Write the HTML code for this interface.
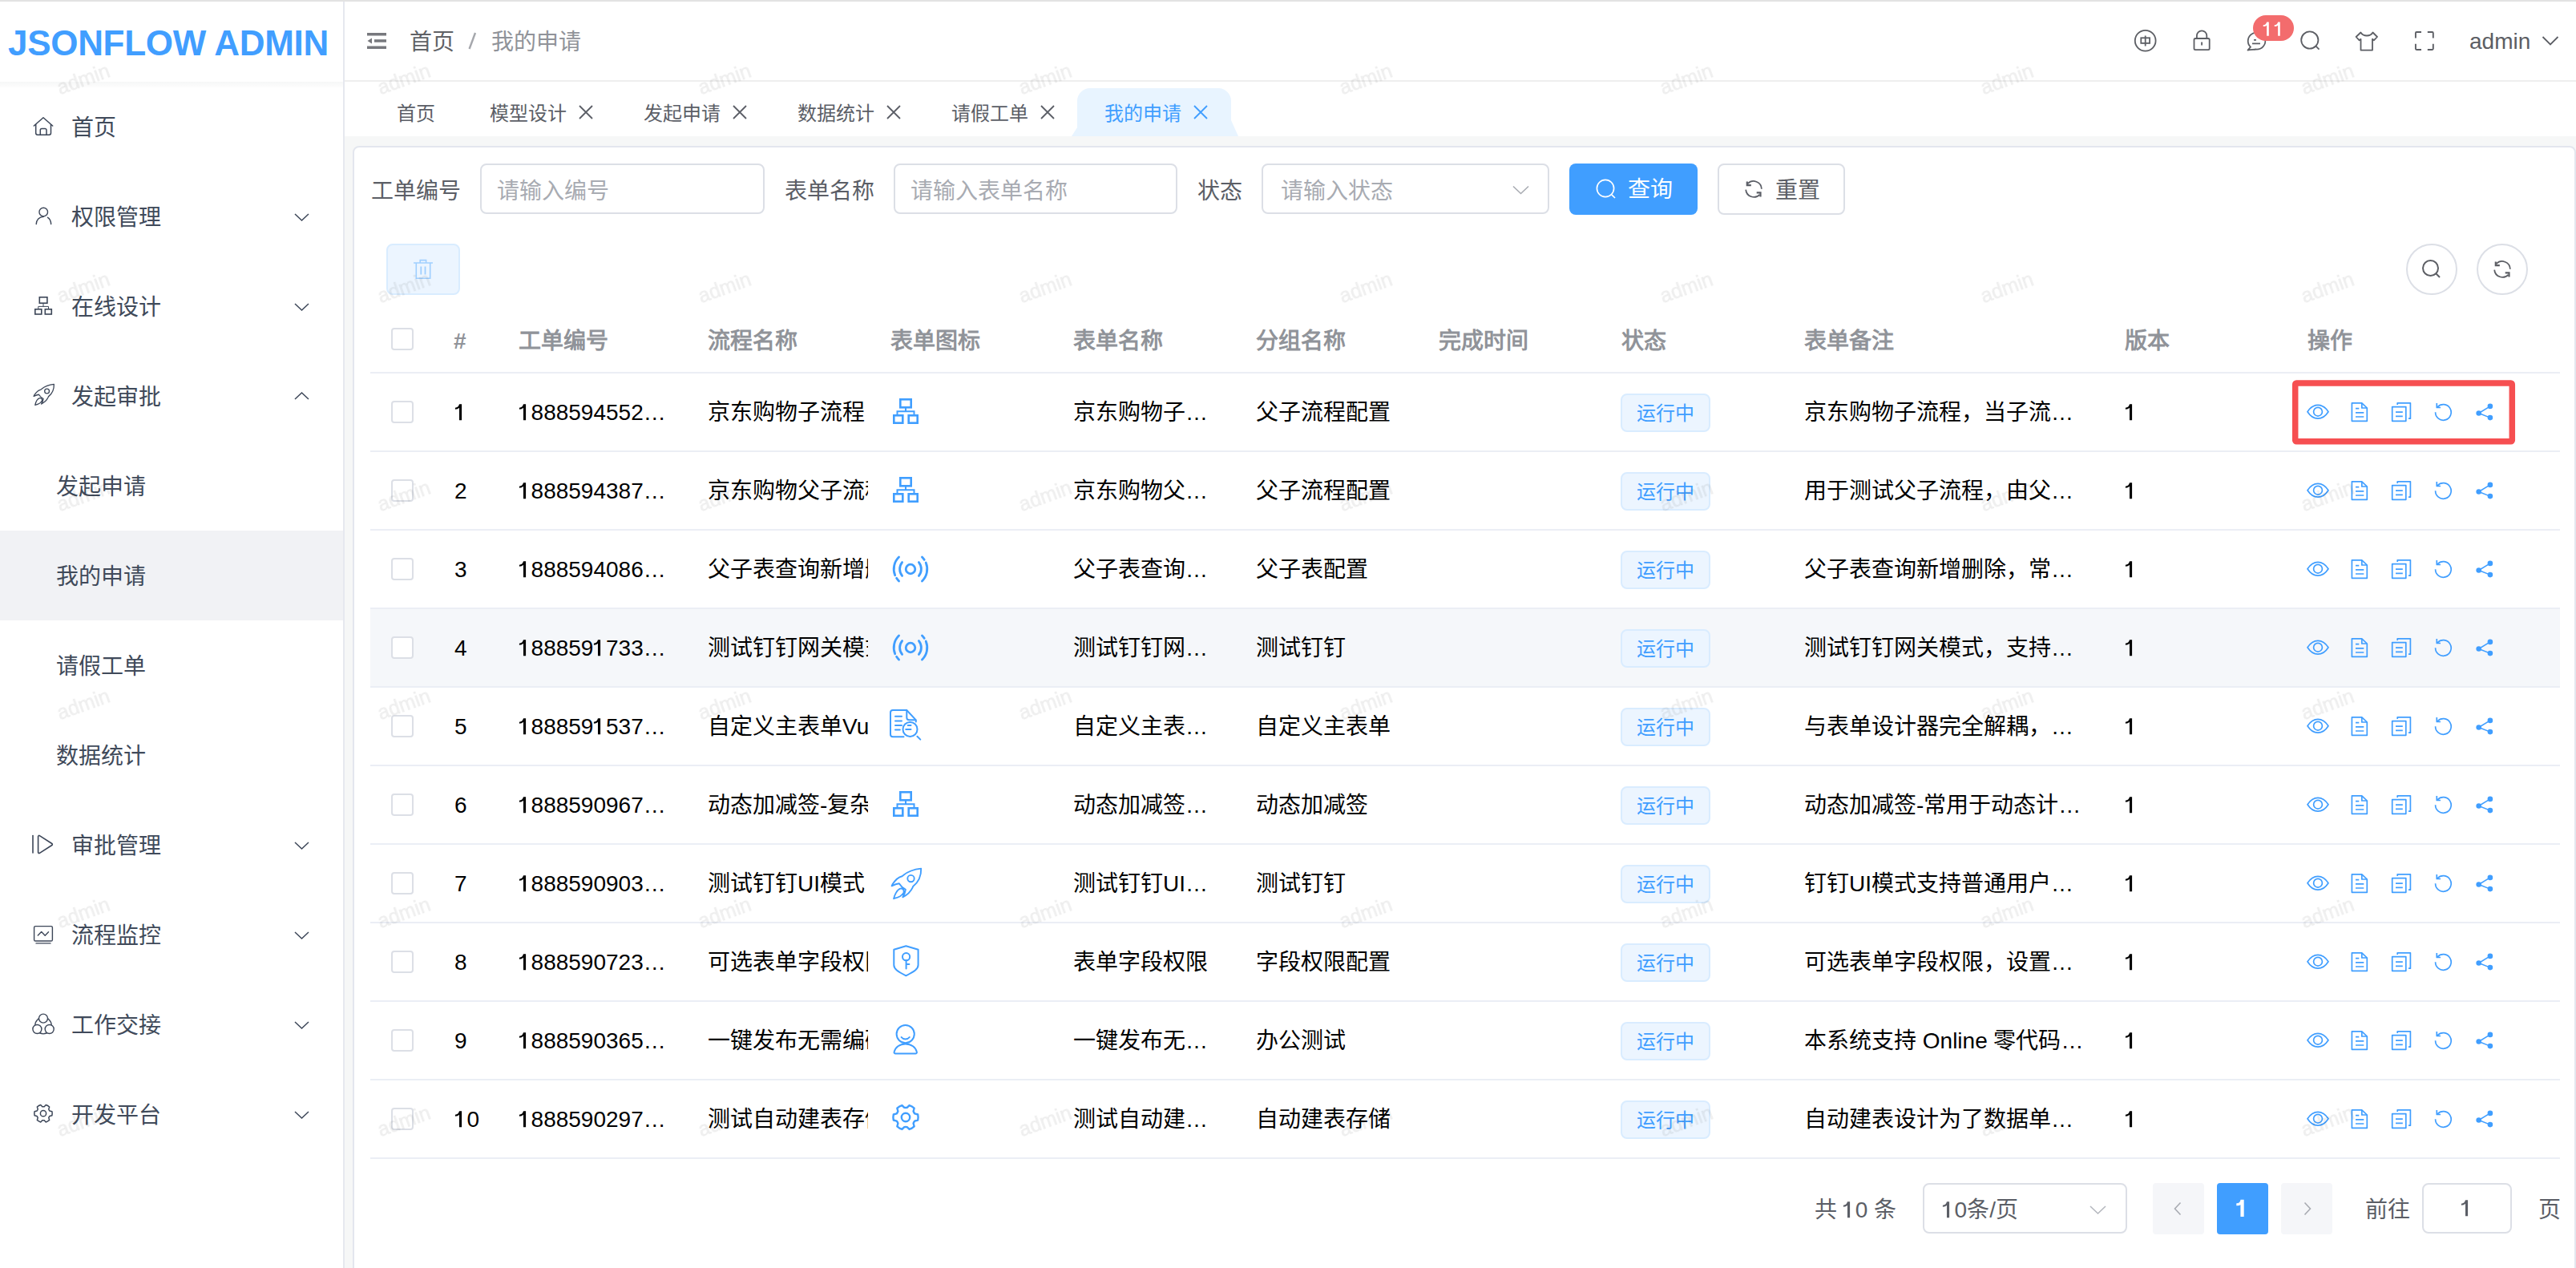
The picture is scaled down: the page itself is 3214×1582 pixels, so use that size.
<!DOCTYPE html><html lang="zh-CN"><head><meta charset="utf-8"><style>
*{box-sizing:border-box;margin:0;padding:0}
html,body{width:3214px;height:1582px;overflow:hidden;background:#fff}
body{font-family:"Liberation Sans",sans-serif;position:relative;color:#303133}
.a{position:absolute;white-space:nowrap}
svg.a{overflow:visible}
.topline{left:0;top:0;width:3214px;height:2px;background:#e2e2e2}
.side{left:0;top:2px;width:428px;height:1580px;background:#fff}
.sideborder{left:428px;top:2px;width:2px;height:1580px;background:#e6e8ef}
.logo{left:10px;top:26px;font-size:44px;font-weight:bold;color:#419eff;letter-spacing:-0.3px;line-height:56px}
.logoshadow{left:0;top:102px;width:428px;height:7px;background:linear-gradient(#f6f7f7,#fdfdfd)}
.mi{left:0;width:428px;height:112px;font-size:28px;color:#404a5a;line-height:112px}
.mi .t{position:absolute;left:89px;top:2px}
.mi.sub .t{left:70px}
.mi.act{background:#f1f2f5}
.mi svg{position:absolute;overflow:visible}
.hdr{left:430px;top:2px;width:2784px;height:98px;background:#fff}
.hdrline{left:430px;top:100px;width:2784px;height:2px;background:#eeeeee}
.tabs{left:430px;top:102px;width:2784px;height:68px;background:#fff}
.content{left:430px;top:170px;width:2784px;height:1412px;background:#f6f7f7}
.card{left:440px;top:182px;width:2774px;height:1420px;background:#fff;border:2px solid #e3e6ee;border-radius:8px}
.tab{top:111.5px;height:60px;line-height:60px;font-size:24px;color:#5b5e66}
.crumb{top:28px;font-size:28px;line-height:50px}
.lbl{font-size:28px;color:#5b5e66;line-height:62px;top:207.5px}
.inp{top:204px;height:63px;border:2px solid #dcdfe6;border-radius:8px;background:#fff}
.ph{font-size:28px;color:#a8abb2;line-height:59px;left:19px;top:2.5px}
.th{top:406px;font-size:28px;font-weight:bold;color:#909399;line-height:40px}
.rowline{left:462px;width:2732px;height:2px;background:#ebeef5}
.td{font-size:28px;color:#000;line-height:40px;overflow:hidden;margin-top:1px}
.tag{height:48px;width:112px;border:2px solid #d9ecff;background:#ecf5ff;border-radius:8px;color:#409eff;font-size:24px;line-height:46px;text-align:center}
.one{position:relative;color:transparent}.one svg{position:absolute;left:0;top:0;width:0.556em;height:1.117em;overflow:visible}
.cb{width:28px;height:28px;border:2px solid #dcdfe6;border-radius:4px;background:#fff}
.wm{font-size:25px;color:rgba(0,0,0,0.058);transform:rotate(-20deg);transform-origin:0 0;pointer-events:none;filter:blur(0.7px);-webkit-text-stroke:0.6px rgba(0,0,0,0.058)}
</style></head><body><div class="a topline"></div>
<div class="a side"></div><div class="a sideborder"></div>
<div class="a logo">JSONFLOW ADMIN</div>
<div class="a logoshadow"></div>
<div class="a mi" style="top:102px"><svg style="left:0;top:0px" width="100" height="112"><g transform="translate(0 -102)"><path d="M42.3 157 L54 146.8 L65.7 157" fill="none" stroke="#3c4658" stroke-width="1.5" stroke-linecap="round" stroke-linejoin="round"/><path d="M44.7 155 V166 A2.2 2.2 0 0 0 46.9 168.2 H61.3 A2.2 2.2 0 0 0 63.5 166 V155" fill="none" stroke="#3c4658" stroke-width="1.5"/><path d="M50.3 168.2 V162.3 A1.8 1.8 0 0 1 52.1 160.5 H56.2 A1.8 1.8 0 0 1 58 162.3 V168.2" fill="none" stroke="#3c4658" stroke-width="1.5"/></g></svg><span class="t">首页</span></div>
<div class="a mi" style="top:214px"><svg style="left:0;top:0px" width="100" height="112"><g transform="translate(0 -214)"><circle cx="54.25" cy="264.6" r="5.3" fill="none" stroke="#3c4658" stroke-width="1.4"/><path d="M45.2 279.6 C45.6 274 49 270.8 54.5 270.4" fill="none" stroke="#3c4658" stroke-width="1.4" stroke-linecap="round"/><path d="M59.5 271.3 C62 272.6 63.4 275.5 63.7 279.6" fill="none" stroke="#3c4658" stroke-width="1.4" stroke-linecap="round"/></g></svg><span class="t">权限管理</span><svg style="left:366px;top:49.5px" width="20" height="14" viewBox="0 0 20 14"><path d="M2 3 L10.5 11 L19 3" fill="none" stroke="#3c4658" stroke-width="1.5"/></svg></div>
<div class="a mi" style="top:326px"><svg style="left:0;top:0px" width="100" height="112"><g transform="translate(0 -326)"><rect x="49.3" y="370.8" width="9.6" height="7.4" fill="none" stroke="#3c4658" stroke-width="1.6"/><path d="M54 378.2 V382.4 M47.8 386 V382.4 H60.5 V386" fill="none" stroke="#3c4658" stroke-width="1"/><rect x="43.8" y="385.8" width="8" height="6.2" fill="none" stroke="#3c4658" stroke-width="1.6"/><rect x="56.3" y="385.8" width="8" height="6.2" fill="none" stroke="#3c4658" stroke-width="1.6"/></g></svg><span class="t">在线设计</span><svg style="left:366px;top:49.5px" width="20" height="14" viewBox="0 0 20 14"><path d="M2 3 L10.5 11 L19 3" fill="none" stroke="#3c4658" stroke-width="1.5"/></svg></div>
<div class="a mi" style="top:438px"><svg style="left:0;top:0px" width="100" height="112"><g transform="translate(0 -438)"><g transform="translate(40.3 479) scale(0.69)"><path d="M39.2 0.6 C31 1.5 23 4 17.4 8.8 L15.5 10.2 C12 11 8 13.5 3.7 20 L2.6 22.4 C6 20.5 9 19.4 11.8 19.2 C13.5 22 16 24.5 19.9 26.9 C19.5 30 18.5 33 16.3 36.3 C21 34 26 30 28.6 24.4 L29.1 23 C36 17.5 39.5 10 39.2 0.6 Z M5.1 38.2 C6 34 9 27 13.4 25.7 C16 25 18.5 27.5 17.5 30.5 C16 34 10 37 5.1 38.2 Z" fill="none" stroke="#3c4658" stroke-width="1.9" stroke-linejoin="round"/><circle cx="26.5" cy="13.1" r="4.2" fill="none" stroke="#3c4658" stroke-width="1.9"/></g></g></svg><span class="t">发起审批</span><svg style="left:366px;top:49px" width="20" height="14" viewBox="0 0 20 14"><path d="M2 11 L10.5 3 L19 11" fill="none" stroke="#3c4658" stroke-width="1.5"/></svg></div>
<div class="a mi sub" style="top:550px"><span class="t">发起申请</span></div>
<div class="a mi sub act" style="top:662px"><span class="t">我的申请</span></div>
<div class="a mi sub" style="top:774px"><span class="t">请假工单</span></div>
<div class="a mi sub" style="top:886px"><span class="t">数据统计</span></div>
<div class="a mi" style="top:998px"><svg style="left:0;top:0px" width="100" height="112"><g transform="translate(0 -998)"><path d="M41 1042.5 V1064" stroke="#3c4658" stroke-width="1.6" stroke-linecap="round"/><path d="M47.6 1043.6 A1.2 1.2 0 0 1 49.4 1042.6 L64.8 1052.5 A1.2 1.2 0 0 1 64.8 1054.5 L49.4 1064.4 A1.2 1.2 0 0 1 47.6 1063.4 Z" fill="none" stroke="#3c4658" stroke-width="1.6" stroke-linejoin="round"/></g></svg><span class="t">审批管理</span><svg style="left:366px;top:49.5px" width="20" height="14" viewBox="0 0 20 14"><path d="M2 3 L10.5 11 L19 3" fill="none" stroke="#3c4658" stroke-width="1.5"/></svg></div>
<div class="a mi" style="top:1110px"><svg style="left:0;top:0px" width="100" height="112"><g transform="translate(0 -1110)"><rect x="42.6" y="1155.6" width="22.8" height="18.4" rx="1.6" fill="none" stroke="#3c4658" stroke-width="1.4"/><path d="M45 1176.9 H63" stroke="#3c4658" stroke-width="1.4" stroke-linecap="round"/><path d="M47.3 1167.1 L51.7 1162.6 L56.2 1167.2 L60.5 1162.8" fill="none" stroke="#3c4658" stroke-width="1.4" stroke-linecap="round" stroke-linejoin="round"/></g></svg><span class="t">流程监控</span><svg style="left:366px;top:49.5px" width="20" height="14" viewBox="0 0 20 14"><path d="M2 3 L10.5 11 L19 3" fill="none" stroke="#3c4658" stroke-width="1.5"/></svg></div>
<div class="a mi" style="top:1222px"><svg style="left:0;top:0px" width="100" height="112"><g transform="translate(0 -1222)"><circle cx="54" cy="1279.5" r="10.3" fill="none" stroke="#3c4658" stroke-width="1.3"/><circle cx="54" cy="1270.6" r="5.5" fill="#fff" stroke="#3c4658" stroke-width="1.4"/><circle cx="46.4" cy="1284" r="5.5" fill="#fff" stroke="#3c4658" stroke-width="1.4"/><circle cx="61.7" cy="1284" r="5.5" fill="#fff" stroke="#3c4658" stroke-width="1.4"/></g></svg><span class="t">工作交接</span><svg style="left:366px;top:49.5px" width="20" height="14" viewBox="0 0 20 14"><path d="M2 3 L10.5 11 L19 3" fill="none" stroke="#3c4658" stroke-width="1.5"/></svg></div>
<div class="a mi" style="top:1334px"><svg style="left:0;top:0px" width="100" height="112"><g transform="translate(0 -1334)"><path d="M64.91 1386.68 A11.20 11.20 0 0 1 64.91 1391.72 L61.97 1392.42 A7.74 7.74 0 0 0 60.78 1394.49 L61.64 1397.39 A11.20 11.20 0 0 1 57.27 1399.91 L55.20 1397.72 A7.74 7.74 0 0 0 52.80 1397.72 L50.73 1399.91 A11.20 11.20 0 0 1 46.36 1397.39 L47.22 1394.49 A7.74 7.74 0 0 0 46.03 1392.42 L43.09 1391.72 A11.20 11.20 0 0 1 43.09 1386.68 L46.03 1385.98 A7.74 7.74 0 0 0 47.22 1383.91 L46.36 1381.01 A11.20 11.20 0 0 1 50.73 1378.49 L52.80 1380.68 A7.74 7.74 0 0 0 55.20 1380.68 L57.27 1378.49 A11.20 11.20 0 0 1 61.64 1381.01 L60.78 1383.91 A7.74 7.74 0 0 0 61.97 1385.98 Z" fill="none" stroke="#3c4658" stroke-width="1.5" stroke-linejoin="round"/><circle cx="54" cy="1389.2" r="3.6" fill="none" stroke="#3c4658" stroke-width="1.5"/></g></svg><span class="t">开发平台</span><svg style="left:366px;top:49.5px" width="20" height="14" viewBox="0 0 20 14"><path d="M2 3 L10.5 11 L19 3" fill="none" stroke="#3c4658" stroke-width="1.5"/></svg></div>
<div class="a hdr"></div><div class="a hdrline"></div>
<svg class="a" style="left:458px;top:41px" width="24" height="20" viewBox="0 0 24 20"><rect x="0" y="0" width="24" height="3.5" fill="#77787d"/><rect x="9" y="8.2" width="15" height="3.5" fill="#77787d"/><rect x="0" y="16.5" width="24" height="3.5" fill="#77787d"/><path d="M0.5 10 L6 6.5 V13.5 Z" fill="#77787d"/></svg>
<div class="a crumb" style="left:510.5px;color:#606266">首页</div>
<svg class="a" style="left:0;top:0" width="1" height="1"><path d="M585.6 61 L593 41" stroke="#a5a7ac" stroke-width="2.4"/></svg>
<div class="a crumb" style="left:612.5px;color:#909399">我的申请</div>
<svg class="a" style="left:0;top:0" width="1" height="1"><g fill="none" stroke="#5c5e64" stroke-width="1.8"><circle cx="2676.7" cy="50.8" r="12.9"/><rect x="2671.3" y="47.3" width="10.8" height="6.6"/><path d="M2676.7 44.5 V57.5"/><path d="M2740.9 47.7 V44.5 A6.2 6.2 0 0 1 2753.3 44.5 V47.7"/><rect x="2737.5" y="48" width="19.2" height="14.2" rx="1.6"/><path d="M2747.1 52.5 V56.5"/></g></svg>
<svg class="a" style="left:0;top:0" width="1" height="1"><g fill="none" stroke="#5c5e64" stroke-width="1.8" stroke-linejoin="round"><path d="M2808 58.6 A10.8 10.4 0 1 1 2814.6 61.5 C2812 61.8 2808 62 2804.5 62.5 Z"/><path d="M2810 54.3 H2820 M2812 49.8 H2815"/></g></svg>
<div class="a" style="left:2811px;top:19px;width:51px;height:32px;border-radius:16px;background:#f36c6d;color:#fff;font-size:24px;line-height:35px;text-align:center"><span class="one">1<svg viewBox="0 0 556 1117" preserveAspectRatio="none"><path d="M214 187 H325 V905 H214 V352 C175 395 105 421 32 421 V349 C125 340 195 285 214 187 Z" fill="#fff"/></svg></span><span class="one">1<svg viewBox="0 0 556 1117" preserveAspectRatio="none"><path d="M214 187 H325 V905 H214 V352 C175 395 105 421 32 421 V349 C125 340 195 285 214 187 Z" fill="#fff"/></svg></span></div>
<svg class="a" style="left:0;top:0" width="1" height="1"><g fill="none" stroke="#5c5e64" stroke-width="1.8"><circle cx="2881.8" cy="50" r="10.6"/><path d="M2889.5 57.6 L2893.5 61.6"/></g></svg>
<svg class="a" style="left:0;top:0" width="1" height="1"><g fill="none" stroke="#5c5e64" stroke-width="1.8" stroke-linejoin="round"><path d="M2945.4 40.5 C2947.5 44 2950 44.5 2953 44.5 C2956 44.5 2958.5 44 2960.5 40.5 L2966 46 L2962 50.2 L2960 48.8 V62.6 H2945.5 V48.8 L2943.5 50.2 L2939.6 46 Z"/></g></svg>
<svg class="a" style="left:0;top:0" width="1" height="1"><g fill="none" stroke="#5c5e64" stroke-width="1.9" stroke-linecap="butt"><path d="M3013.9 47.5 V41.2 A1.2 1.2 0 0 1 3015.1 40 H3021"/><path d="M3028.8 40 H3034.6 A1.2 1.2 0 0 1 3035.8 41.2 V47.5"/><path d="M3035.8 54.8 V60.8 A1.2 1.2 0 0 1 3034.6 62 H3028.8"/><path d="M3021 62 H3015.1 A1.2 1.2 0 0 1 3013.9 60.8 V54.8"/></g></svg>
<div class="a" style="left:3081px;top:29px;font-size:28px;line-height:46px;color:#5c5e64">admin</div>
<svg class="a" style="left:3171px;top:44px" width="22" height="14" viewBox="0 0 22 14"><path d="M1.5 2 L11 11.5 L20.5 2" fill="none" stroke="#5c5e64" stroke-width="1.8"/></svg>
<div class="a tabs"></div>
<svg class="a" style="left:1337px;top:110px" width="208" height="60" viewBox="0 0 208 60"><path d="M0 60 L7 49 V16 A16 16 0 0 1 23 0 H183 A16 16 0 0 1 199 16 V40 L208 60 Z" fill="#e8f4ff"/></svg>
<div class="a tab" style="left:495px;color:#5b5e66">首页</div>
<div class="a tab" style="left:611px;color:#5b5e66">模型设计</div>
<svg class="a" style="left:721px;top:130px" width="20" height="20" viewBox="0 0 20 20"><path d="M2 2 L18 18 M18 2 L2 18" stroke="#5b5e66" stroke-width="1.8"/></svg>
<div class="a tab" style="left:803px;color:#5b5e66">发起申请</div>
<svg class="a" style="left:913px;top:130px" width="20" height="20" viewBox="0 0 20 20"><path d="M2 2 L18 18 M18 2 L2 18" stroke="#5b5e66" stroke-width="1.8"/></svg>
<div class="a tab" style="left:995px;color:#5b5e66">数据统计</div>
<svg class="a" style="left:1105px;top:130px" width="20" height="20" viewBox="0 0 20 20"><path d="M2 2 L18 18 M18 2 L2 18" stroke="#5b5e66" stroke-width="1.8"/></svg>
<div class="a tab" style="left:1187px;color:#5b5e66">请假工单</div>
<svg class="a" style="left:1297px;top:130px" width="20" height="20" viewBox="0 0 20 20"><path d="M2 2 L18 18 M18 2 L2 18" stroke="#5b5e66" stroke-width="1.8"/></svg>
<div class="a tab" style="left:1378px;color:#409eff">我的申请</div>
<svg class="a" style="left:1488px;top:130px" width="20" height="20" viewBox="0 0 20 20"><path d="M2 2 L18 18 M18 2 L2 18" stroke="#409eff" stroke-width="1.8"/></svg>
<div class="a content"></div>
<div class="a card"></div>
<div class="a lbl" style="left:463px">工单编号</div>
<div class="a inp" style="left:599px;width:355px"><div class="a ph">请输入编号</div></div>
<div class="a lbl" style="left:979px">表单名称</div>
<div class="a inp" style="left:1115px;width:354px"><div class="a ph">请输入表单名称</div></div>
<div class="a lbl" style="left:1494px">状态</div>
<div class="a inp" style="left:1574px;width:359px"><div class="a ph" style="left:22px">请输入状态</div><svg class="a" style="left:309px;top:24px" width="24" height="14" viewBox="0 0 24 14"><path d="M3 2.5 L12.5 11.5 L22 2.5" fill="none" stroke="#a8abb2" stroke-width="1.6"/></svg></div>
<div class="a" style="left:1958px;top:204px;width:160px;height:64px;background:#409eff;border-radius:8px"></div>
<svg class="a" style="left:1991px;top:223px" width="26" height="26" viewBox="0 0 26 26"><circle cx="12" cy="12" r="10.6" fill="none" stroke="#fff" stroke-width="1.7"/><path d="M19.8 19.8 L24 24" stroke="#fff" stroke-width="1.7"/></svg>
<div class="a" style="left:2031px;top:205px;font-size:28px;line-height:64px;color:#fff">查询</div>
<div class="a" style="left:2143px;top:204px;width:159px;height:64px;border:2px solid #dcdfe6;border-radius:8px;background:#fff"></div>
<svg class="a" style="left:2176px;top:223.8px" width="24" height="24" viewBox="0 0 24 24"><g fill="none" stroke="#5b5e66" stroke-width="1.8"><path d="M4.6 5.1 A10.1 10.1 0 0 1 21.9 11.7 M2.2 12.6 A10.1 10.1 0 0 0 19.5 18.8"/></g><g fill="none" stroke="#5b5e66" stroke-width="2.2"><path d="M3.8 2.6 V7.2 H8.8 M15.7 16.4 H20.5 V21.5"/></g></svg>
<div class="a" style="left:2215px;top:205.5px;font-size:28px;line-height:64px;color:#5b5e66">重置</div>
<div class="a" style="left:482px;top:304px;width:92px;height:64px;background:#ecf5ff;border:2px solid #d9ecff;border-radius:8px"></div>
<svg class="a" style="left:0;top:0" width="1" height="1"><g fill="none" stroke="#a0cfff" stroke-width="1.6"><path d="M516 328 H540 M524.2 328 V324.6 H531.6 V328 M519.3 328 V347.2 H536.7 V328"/><path d="M525.3 332.5 V342.5 M530.5 332.5 V342.5" stroke-width="1.8"/></g></svg>
<div class="a" style="left:3002px;top:304px;width:64px;height:64px;border:2px solid #dcdfe6;border-radius:50%;background:#fff"></div>
<svg class="a" style="left:3021px;top:323px" width="26" height="26" viewBox="0 0 26 26"><circle cx="11.5" cy="11.5" r="9.5" fill="none" stroke="#5c5e64" stroke-width="2"/><path d="M18.5 18.5 L23 23" stroke="#5c5e64" stroke-width="2"/></svg>
<div class="a" style="left:3090px;top:304px;width:64px;height:64px;border:2px solid #dcdfe6;border-radius:50%;background:#fff"></div>
<svg class="a" style="left:3109.8px;top:323.8px" width="24" height="24" viewBox="0 0 24 24"><g fill="none" stroke="#5c5e64" stroke-width="1.8"><path d="M4.6 5.1 A10.1 10.1 0 0 1 21.9 11.7 M2.2 12.6 A10.1 10.1 0 0 0 19.5 18.8"/></g><g fill="none" stroke="#5c5e64" stroke-width="2.2"><path d="M3.8 2.6 V7.2 H8.8 M15.7 16.4 H20.5 V21.5"/></g></svg>
<div class="a cb" style="left:488px;top:409px"></div>
<div class="a th" style="left:566px">#</div>
<div class="a th" style="left:647px">工单编号</div>
<div class="a th" style="left:883px">流程名称</div>
<div class="a th" style="left:1111px">表单图标</div>
<div class="a th" style="left:1339px">表单名称</div>
<div class="a th" style="left:1567px">分组名称</div>
<div class="a th" style="left:1795px">完成时间</div>
<div class="a th" style="left:2023px">状态</div>
<div class="a th" style="left:2251px">表单备注</div>
<div class="a th" style="left:2651px">版本</div>
<div class="a th" style="left:2879px">操作</div>
<div class="a rowline" style="top:464px"></div>
<div class="a cb" style="left:488px;top:500px"></div>
<div class="a td" style="left:567px;top:494px"><span class="one">1<svg viewBox="0 0 556 1117" preserveAspectRatio="none"><path d="M214 187 H325 V905 H214 V352 C175 395 105 421 32 421 V349 C125 340 195 285 214 187 Z" fill="#000"/></svg></span></div>
<div class="a td" style="left:647px;top:494px"><span class="one">1<svg viewBox="0 0 556 1117" preserveAspectRatio="none"><path d="M214 187 H325 V905 H214 V352 C175 395 105 421 32 421 V349 C125 340 195 285 214 187 Z" fill="#000"/></svg></span>888594552…</div>
<div class="a td" style="left:883px;top:494px;width:200px">京东购物子流程</div>
<svg class="a" style="left:1114px;top:496.5px" width="32" height="32" viewBox="0 0 32 32"><g fill="none" stroke="#409eff" stroke-width="2.6"><rect x="9.3" y="1.3" width="13.4" height="10"/><path d="M16 11.3 V16.3 M5.5 21 V16.3 H26.5 V21" stroke-width="2"/><rect x="1.3" y="21.3" width="11" height="9.4"/><rect x="19.7" y="21.3" width="11" height="9.4"/></g></svg>
<div class="a td" style="left:1339px;top:494px">京东购物子…</div>
<div class="a td" style="left:1567px;top:494px">父子流程配置</div>
<div class="a tag" style="left:2022px;top:491px">运行中</div>
<div class="a td" style="left:2251px;top:494px">京东购物子流程，当子流…</div>
<div class="a td" style="left:2651px;top:494px"><span class="one">1<svg viewBox="0 0 556 1117" preserveAspectRatio="none"><path d="M214 187 H325 V905 H214 V352 C175 395 105 421 32 421 V349 C125 340 195 285 214 187 Z" fill="#000"/></svg></span></div>
<svg class="a" style="left:0;top:-98px" width="1" height="1"><g fill="none" stroke="#409eff" stroke-width="1.7" stroke-linejoin="round"><path d="M2879 611.7 C2883 605.5 2887 603.3 2892 603.3 C2897 603.3 2901 605.5 2905 611.7 C2901 617.9 2897 620.2 2892 620.2 C2887 620.2 2883 617.9 2879 611.7 Z"/><circle cx="2892" cy="611.7" r="5.4"/><path d="M2934.4 600.8 H2946.8 L2953.3 607 V623.3 H2934.4 Z"/><path d="M2946.8 601 V607 H2953"/><path d="M2939 607.6 H2943.3 M2939 612.8 H2949.3 M2939 618 H2949.3"/><path d="M2991.2 603 V600.8 H3007.4 V620.2 H3005"/><path d="M2984.7 605.6 H3001.8 V623.3 H2984.7 Z"/><path d="M2989 612.2 H2997.8 M2989 617.4 H2997.8"/><path d="M3040.3 601 V606.5 H3045"/><path d="M3041.2 605.8 A9.8 9.8 0 1 1 3038.6 612.2"/><path d="M3106.9 604.9 L3092.7 613.5 L3106.9 619.1" stroke-width="1.5"/></g><g fill="#409eff"><circle cx="3106.9" cy="604.9" r="3.3"/><circle cx="3092.7" cy="613.5" r="3.3"/><circle cx="3106.9" cy="619.1" r="3.3"/></g></svg>
<div class="a rowline" style="top:562px"></div>
<div class="a cb" style="left:488px;top:598px"></div>
<div class="a td" style="left:567px;top:592px">2</div>
<div class="a td" style="left:647px;top:592px"><span class="one">1<svg viewBox="0 0 556 1117" preserveAspectRatio="none"><path d="M214 187 H325 V905 H214 V352 C175 395 105 421 32 421 V349 C125 340 195 285 214 187 Z" fill="#000"/></svg></span>888594387…</div>
<div class="a td" style="left:883px;top:592px;width:200px">京东购物父子流程</div>
<svg class="a" style="left:1114px;top:594.5px" width="32" height="32" viewBox="0 0 32 32"><g fill="none" stroke="#409eff" stroke-width="2.6"><rect x="9.3" y="1.3" width="13.4" height="10"/><path d="M16 11.3 V16.3 M5.5 21 V16.3 H26.5 V21" stroke-width="2"/><rect x="1.3" y="21.3" width="11" height="9.4"/><rect x="19.7" y="21.3" width="11" height="9.4"/></g></svg>
<div class="a td" style="left:1339px;top:592px">京东购物父…</div>
<div class="a td" style="left:1567px;top:592px">父子流程配置</div>
<div class="a tag" style="left:2022px;top:589px">运行中</div>
<div class="a td" style="left:2251px;top:592px">用于测试父子流程，由父…</div>
<div class="a td" style="left:2651px;top:592px"><span class="one">1<svg viewBox="0 0 556 1117" preserveAspectRatio="none"><path d="M214 187 H325 V905 H214 V352 C175 395 105 421 32 421 V349 C125 340 195 285 214 187 Z" fill="#000"/></svg></span></div>
<svg class="a" style="left:0;top:0px" width="1" height="1"><g fill="none" stroke="#409eff" stroke-width="1.7" stroke-linejoin="round"><path d="M2879 611.7 C2883 605.5 2887 603.3 2892 603.3 C2897 603.3 2901 605.5 2905 611.7 C2901 617.9 2897 620.2 2892 620.2 C2887 620.2 2883 617.9 2879 611.7 Z"/><circle cx="2892" cy="611.7" r="5.4"/><path d="M2934.4 600.8 H2946.8 L2953.3 607 V623.3 H2934.4 Z"/><path d="M2946.8 601 V607 H2953"/><path d="M2939 607.6 H2943.3 M2939 612.8 H2949.3 M2939 618 H2949.3"/><path d="M2991.2 603 V600.8 H3007.4 V620.2 H3005"/><path d="M2984.7 605.6 H3001.8 V623.3 H2984.7 Z"/><path d="M2989 612.2 H2997.8 M2989 617.4 H2997.8"/><path d="M3040.3 601 V606.5 H3045"/><path d="M3041.2 605.8 A9.8 9.8 0 1 1 3038.6 612.2"/><path d="M3106.9 604.9 L3092.7 613.5 L3106.9 619.1" stroke-width="1.5"/></g><g fill="#409eff"><circle cx="3106.9" cy="604.9" r="3.3"/><circle cx="3092.7" cy="613.5" r="3.3"/><circle cx="3106.9" cy="619.1" r="3.3"/></g></svg>
<div class="a rowline" style="top:660px"></div>
<div class="a cb" style="left:488px;top:696px"></div>
<div class="a td" style="left:567px;top:690px">3</div>
<div class="a td" style="left:647px;top:690px"><span class="one">1<svg viewBox="0 0 556 1117" preserveAspectRatio="none"><path d="M214 187 H325 V905 H214 V352 C175 395 105 421 32 421 V349 C125 340 195 285 214 187 Z" fill="#000"/></svg></span>888594086…</div>
<div class="a td" style="left:883px;top:690px;width:200px">父子表查询新增删除</div>
<svg class="a" style="left:1114.4px;top:693.8px" width="44" height="32" viewBox="0 0 44 32"><g fill="none" stroke="#409eff" stroke-width="2.8" stroke-linecap="round"><circle cx="22" cy="16" r="5.8"/><path d="M11.59 7.57 A13.40 13.40 0 0 0 11.59 24.43 M32.41 7.57 A13.40 13.40 0 0 1 32.41 24.43 M7.55 1.04 A20.80 20.80 0 0 0 2.71 23.79 M4.56 27.33 A20.80 20.80 0 0 0 7.55 30.96 M36.45 1.04 A20.80 20.80 0 0 1 39.24 4.37 M41.22 8.04 A20.80 20.80 0 0 1 36.45 30.96 "/></g></svg>
<div class="a td" style="left:1339px;top:690px">父子表查询…</div>
<div class="a td" style="left:1567px;top:690px">父子表配置</div>
<div class="a tag" style="left:2022px;top:687px">运行中</div>
<div class="a td" style="left:2251px;top:690px">父子表查询新增删除，常…</div>
<div class="a td" style="left:2651px;top:690px"><span class="one">1<svg viewBox="0 0 556 1117" preserveAspectRatio="none"><path d="M214 187 H325 V905 H214 V352 C175 395 105 421 32 421 V349 C125 340 195 285 214 187 Z" fill="#000"/></svg></span></div>
<svg class="a" style="left:0;top:98px" width="1" height="1"><g fill="none" stroke="#409eff" stroke-width="1.7" stroke-linejoin="round"><path d="M2879 611.7 C2883 605.5 2887 603.3 2892 603.3 C2897 603.3 2901 605.5 2905 611.7 C2901 617.9 2897 620.2 2892 620.2 C2887 620.2 2883 617.9 2879 611.7 Z"/><circle cx="2892" cy="611.7" r="5.4"/><path d="M2934.4 600.8 H2946.8 L2953.3 607 V623.3 H2934.4 Z"/><path d="M2946.8 601 V607 H2953"/><path d="M2939 607.6 H2943.3 M2939 612.8 H2949.3 M2939 618 H2949.3"/><path d="M2991.2 603 V600.8 H3007.4 V620.2 H3005"/><path d="M2984.7 605.6 H3001.8 V623.3 H2984.7 Z"/><path d="M2989 612.2 H2997.8 M2989 617.4 H2997.8"/><path d="M3040.3 601 V606.5 H3045"/><path d="M3041.2 605.8 A9.8 9.8 0 1 1 3038.6 612.2"/><path d="M3106.9 604.9 L3092.7 613.5 L3106.9 619.1" stroke-width="1.5"/></g><g fill="#409eff"><circle cx="3106.9" cy="604.9" r="3.3"/><circle cx="3092.7" cy="613.5" r="3.3"/><circle cx="3106.9" cy="619.1" r="3.3"/></g></svg>
<div class="a rowline" style="top:758px"></div>
<div class="a" style="left:462px;top:760px;width:2732px;height:96px;background:#f5f7fa"></div>
<div class="a cb" style="left:488px;top:794px"></div>
<div class="a td" style="left:567px;top:788px">4</div>
<div class="a td" style="left:647px;top:788px"><span class="one">1<svg viewBox="0 0 556 1117" preserveAspectRatio="none"><path d="M214 187 H325 V905 H214 V352 C175 395 105 421 32 421 V349 C125 340 195 285 214 187 Z" fill="#000"/></svg></span>88859<span class="one">1<svg viewBox="0 0 556 1117" preserveAspectRatio="none"><path d="M214 187 H325 V905 H214 V352 C175 395 105 421 32 421 V349 C125 340 195 285 214 187 Z" fill="#000"/></svg></span>733…</div>
<div class="a td" style="left:883px;top:788px;width:200px">测试钉钉网关模式</div>
<svg class="a" style="left:1114.4px;top:791.8px" width="44" height="32" viewBox="0 0 44 32"><g fill="none" stroke="#409eff" stroke-width="2.8" stroke-linecap="round"><circle cx="22" cy="16" r="5.8"/><path d="M11.59 7.57 A13.40 13.40 0 0 0 11.59 24.43 M32.41 7.57 A13.40 13.40 0 0 1 32.41 24.43 M7.55 1.04 A20.80 20.80 0 0 0 2.71 23.79 M4.56 27.33 A20.80 20.80 0 0 0 7.55 30.96 M36.45 1.04 A20.80 20.80 0 0 1 39.24 4.37 M41.22 8.04 A20.80 20.80 0 0 1 36.45 30.96 "/></g></svg>
<div class="a td" style="left:1339px;top:788px">测试钉钉网…</div>
<div class="a td" style="left:1567px;top:788px">测试钉钉</div>
<div class="a tag" style="left:2022px;top:785px">运行中</div>
<div class="a td" style="left:2251px;top:788px">测试钉钉网关模式，支持…</div>
<div class="a td" style="left:2651px;top:788px"><span class="one">1<svg viewBox="0 0 556 1117" preserveAspectRatio="none"><path d="M214 187 H325 V905 H214 V352 C175 395 105 421 32 421 V349 C125 340 195 285 214 187 Z" fill="#000"/></svg></span></div>
<svg class="a" style="left:0;top:196px" width="1" height="1"><g fill="none" stroke="#409eff" stroke-width="1.7" stroke-linejoin="round"><path d="M2879 611.7 C2883 605.5 2887 603.3 2892 603.3 C2897 603.3 2901 605.5 2905 611.7 C2901 617.9 2897 620.2 2892 620.2 C2887 620.2 2883 617.9 2879 611.7 Z"/><circle cx="2892" cy="611.7" r="5.4"/><path d="M2934.4 600.8 H2946.8 L2953.3 607 V623.3 H2934.4 Z"/><path d="M2946.8 601 V607 H2953"/><path d="M2939 607.6 H2943.3 M2939 612.8 H2949.3 M2939 618 H2949.3"/><path d="M2991.2 603 V600.8 H3007.4 V620.2 H3005"/><path d="M2984.7 605.6 H3001.8 V623.3 H2984.7 Z"/><path d="M2989 612.2 H2997.8 M2989 617.4 H2997.8"/><path d="M3040.3 601 V606.5 H3045"/><path d="M3041.2 605.8 A9.8 9.8 0 1 1 3038.6 612.2"/><path d="M3106.9 604.9 L3092.7 613.5 L3106.9 619.1" stroke-width="1.5"/></g><g fill="#409eff"><circle cx="3106.9" cy="604.9" r="3.3"/><circle cx="3092.7" cy="613.5" r="3.3"/><circle cx="3106.9" cy="619.1" r="3.3"/></g></svg>
<div class="a rowline" style="top:856px"></div>
<div class="a cb" style="left:488px;top:892px"></div>
<div class="a td" style="left:567px;top:886px">5</div>
<div class="a td" style="left:647px;top:886px"><span class="one">1<svg viewBox="0 0 556 1117" preserveAspectRatio="none"><path d="M214 187 H325 V905 H214 V352 C175 395 105 421 32 421 V349 C125 340 195 285 214 187 Z" fill="#000"/></svg></span>88859<span class="one">1<svg viewBox="0 0 556 1117" preserveAspectRatio="none"><path d="M214 187 H325 V905 H214 V352 C175 395 105 421 32 421 V349 C125 340 195 285 214 187 Z" fill="#000"/></svg></span>537…</div>
<div class="a td" style="left:883px;top:886px;width:200px">自定义主表单Vue</div>
<svg class="a" style="left:1110px;top:884.5px" width="42" height="42" viewBox="0 0 42 42"><g fill="none" stroke="#409eff" stroke-width="2" stroke-linecap="round"><path d="M17.5 34.3 H4 A3 3 0 0 1 1 31.3 V4 A3 3 0 0 1 4 1 H21.3 L32.8 13.3 V15.5"/><path d="M21.3 1.5 V10.3 A3 3 0 0 0 24.3 13.3 H32.3"/><path d="M7 8.8 H15 M7 14.4 H15 M7 20 H15 M7 25.6 H12.8"/><circle cx="25.5" cy="24.9" r="9"/><path d="M20.2 24.9 H26.5 M22.7 20 H26.5" /><path d="M34.4 33.8 L38.3 37.6"/></g></svg>
<div class="a td" style="left:1339px;top:886px">自定义主表…</div>
<div class="a td" style="left:1567px;top:886px">自定义主表单</div>
<div class="a tag" style="left:2022px;top:883px">运行中</div>
<div class="a td" style="left:2251px;top:886px">与表单设计器完全解耦，…</div>
<div class="a td" style="left:2651px;top:886px"><span class="one">1<svg viewBox="0 0 556 1117" preserveAspectRatio="none"><path d="M214 187 H325 V905 H214 V352 C175 395 105 421 32 421 V349 C125 340 195 285 214 187 Z" fill="#000"/></svg></span></div>
<svg class="a" style="left:0;top:294px" width="1" height="1"><g fill="none" stroke="#409eff" stroke-width="1.7" stroke-linejoin="round"><path d="M2879 611.7 C2883 605.5 2887 603.3 2892 603.3 C2897 603.3 2901 605.5 2905 611.7 C2901 617.9 2897 620.2 2892 620.2 C2887 620.2 2883 617.9 2879 611.7 Z"/><circle cx="2892" cy="611.7" r="5.4"/><path d="M2934.4 600.8 H2946.8 L2953.3 607 V623.3 H2934.4 Z"/><path d="M2946.8 601 V607 H2953"/><path d="M2939 607.6 H2943.3 M2939 612.8 H2949.3 M2939 618 H2949.3"/><path d="M2991.2 603 V600.8 H3007.4 V620.2 H3005"/><path d="M2984.7 605.6 H3001.8 V623.3 H2984.7 Z"/><path d="M2989 612.2 H2997.8 M2989 617.4 H2997.8"/><path d="M3040.3 601 V606.5 H3045"/><path d="M3041.2 605.8 A9.8 9.8 0 1 1 3038.6 612.2"/><path d="M3106.9 604.9 L3092.7 613.5 L3106.9 619.1" stroke-width="1.5"/></g><g fill="#409eff"><circle cx="3106.9" cy="604.9" r="3.3"/><circle cx="3092.7" cy="613.5" r="3.3"/><circle cx="3106.9" cy="619.1" r="3.3"/></g></svg>
<div class="a rowline" style="top:954px"></div>
<div class="a cb" style="left:488px;top:990px"></div>
<div class="a td" style="left:567px;top:984px">6</div>
<div class="a td" style="left:647px;top:984px"><span class="one">1<svg viewBox="0 0 556 1117" preserveAspectRatio="none"><path d="M214 187 H325 V905 H214 V352 C175 395 105 421 32 421 V349 C125 340 195 285 214 187 Z" fill="#000"/></svg></span>888590967…</div>
<div class="a td" style="left:883px;top:984px;width:200px">动态加减签-复杂</div>
<svg class="a" style="left:1114px;top:986.5px" width="32" height="32" viewBox="0 0 32 32"><g fill="none" stroke="#409eff" stroke-width="2.6"><rect x="9.3" y="1.3" width="13.4" height="10"/><path d="M16 11.3 V16.3 M5.5 21 V16.3 H26.5 V21" stroke-width="2"/><rect x="1.3" y="21.3" width="11" height="9.4"/><rect x="19.7" y="21.3" width="11" height="9.4"/></g></svg>
<div class="a td" style="left:1339px;top:984px">动态加减签…</div>
<div class="a td" style="left:1567px;top:984px">动态加减签</div>
<div class="a tag" style="left:2022px;top:981px">运行中</div>
<div class="a td" style="left:2251px;top:984px">动态加减签-常用于动态计…</div>
<div class="a td" style="left:2651px;top:984px"><span class="one">1<svg viewBox="0 0 556 1117" preserveAspectRatio="none"><path d="M214 187 H325 V905 H214 V352 C175 395 105 421 32 421 V349 C125 340 195 285 214 187 Z" fill="#000"/></svg></span></div>
<svg class="a" style="left:0;top:392px" width="1" height="1"><g fill="none" stroke="#409eff" stroke-width="1.7" stroke-linejoin="round"><path d="M2879 611.7 C2883 605.5 2887 603.3 2892 603.3 C2897 603.3 2901 605.5 2905 611.7 C2901 617.9 2897 620.2 2892 620.2 C2887 620.2 2883 617.9 2879 611.7 Z"/><circle cx="2892" cy="611.7" r="5.4"/><path d="M2934.4 600.8 H2946.8 L2953.3 607 V623.3 H2934.4 Z"/><path d="M2946.8 601 V607 H2953"/><path d="M2939 607.6 H2943.3 M2939 612.8 H2949.3 M2939 618 H2949.3"/><path d="M2991.2 603 V600.8 H3007.4 V620.2 H3005"/><path d="M2984.7 605.6 H3001.8 V623.3 H2984.7 Z"/><path d="M2989 612.2 H2997.8 M2989 617.4 H2997.8"/><path d="M3040.3 601 V606.5 H3045"/><path d="M3041.2 605.8 A9.8 9.8 0 1 1 3038.6 612.2"/><path d="M3106.9 604.9 L3092.7 613.5 L3106.9 619.1" stroke-width="1.5"/></g><g fill="#409eff"><circle cx="3106.9" cy="604.9" r="3.3"/><circle cx="3092.7" cy="613.5" r="3.3"/><circle cx="3106.9" cy="619.1" r="3.3"/></g></svg>
<div class="a rowline" style="top:1052px"></div>
<div class="a cb" style="left:488px;top:1088px"></div>
<div class="a td" style="left:567px;top:1082px">7</div>
<div class="a td" style="left:647px;top:1082px"><span class="one">1<svg viewBox="0 0 556 1117" preserveAspectRatio="none"><path d="M214 187 H325 V905 H214 V352 C175 395 105 421 32 421 V349 C125 340 195 285 214 187 Z" fill="#000"/></svg></span>888590903…</div>
<div class="a td" style="left:883px;top:1082px;width:200px">测试钉钉UI模式</div>
<svg class="a" style="left:1110.2px;top:1082.8px" width="40" height="40" viewBox="0 0 40 40"><path d="M39.2 0.6 C31 1.5 23 4 17.4 8.8 L15.5 10.2 C12 11 8 13.5 3.7 20 L2.6 22.4 C6 20.5 9 19.4 11.8 19.2 C13.5 22 16 24.5 19.9 26.9 C19.5 30 18.5 33 16.3 36.3 C21 34 26 30 28.6 24.4 L29.1 23 C36 17.5 39.5 10 39.2 0.6 Z M5.1 38.2 C6 34 9 27 13.4 25.7 C16 25 18.5 27.5 17.5 30.5 C16 34 10 37 5.1 38.2 Z" fill="none" stroke="#409eff" stroke-width="1.9" stroke-linejoin="round"/><circle cx="26.5" cy="13.1" r="4.2" fill="none" stroke="#409eff" stroke-width="1.9"/></svg>
<div class="a td" style="left:1339px;top:1082px">测试钉钉UI…</div>
<div class="a td" style="left:1567px;top:1082px">测试钉钉</div>
<div class="a tag" style="left:2022px;top:1079px">运行中</div>
<div class="a td" style="left:2251px;top:1082px">钉钉UI模式支持普通用户…</div>
<div class="a td" style="left:2651px;top:1082px"><span class="one">1<svg viewBox="0 0 556 1117" preserveAspectRatio="none"><path d="M214 187 H325 V905 H214 V352 C175 395 105 421 32 421 V349 C125 340 195 285 214 187 Z" fill="#000"/></svg></span></div>
<svg class="a" style="left:0;top:490px" width="1" height="1"><g fill="none" stroke="#409eff" stroke-width="1.7" stroke-linejoin="round"><path d="M2879 611.7 C2883 605.5 2887 603.3 2892 603.3 C2897 603.3 2901 605.5 2905 611.7 C2901 617.9 2897 620.2 2892 620.2 C2887 620.2 2883 617.9 2879 611.7 Z"/><circle cx="2892" cy="611.7" r="5.4"/><path d="M2934.4 600.8 H2946.8 L2953.3 607 V623.3 H2934.4 Z"/><path d="M2946.8 601 V607 H2953"/><path d="M2939 607.6 H2943.3 M2939 612.8 H2949.3 M2939 618 H2949.3"/><path d="M2991.2 603 V600.8 H3007.4 V620.2 H3005"/><path d="M2984.7 605.6 H3001.8 V623.3 H2984.7 Z"/><path d="M2989 612.2 H2997.8 M2989 617.4 H2997.8"/><path d="M3040.3 601 V606.5 H3045"/><path d="M3041.2 605.8 A9.8 9.8 0 1 1 3038.6 612.2"/><path d="M3106.9 604.9 L3092.7 613.5 L3106.9 619.1" stroke-width="1.5"/></g><g fill="#409eff"><circle cx="3106.9" cy="604.9" r="3.3"/><circle cx="3092.7" cy="613.5" r="3.3"/><circle cx="3106.9" cy="619.1" r="3.3"/></g></svg>
<div class="a rowline" style="top:1150px"></div>
<div class="a cb" style="left:488px;top:1186px"></div>
<div class="a td" style="left:567px;top:1180px">8</div>
<div class="a td" style="left:647px;top:1180px"><span class="one">1<svg viewBox="0 0 556 1117" preserveAspectRatio="none"><path d="M214 187 H325 V905 H214 V352 C175 395 105 421 32 421 V349 C125 340 195 285 214 187 Z" fill="#000"/></svg></span>888590723…</div>
<div class="a td" style="left:883px;top:1180px;width:200px">可选表单字段权限</div>
<svg class="a" style="left:1113.7px;top:1179.3px" width="33" height="40" viewBox="0 0 33 40"><g fill="none" stroke="#409eff" stroke-width="2" stroke-linejoin="round" stroke-linecap="round"><path d="M16.4 1.3 L31.6 5.7 V25 C31.6 30 27 33 16.4 38.3 C5.8 33 1.3 30 1.3 25 V5.7 Z"/><circle cx="16.6" cy="14.7" r="4.6"/><path d="M16.6 19.3 V29.5 M16.6 24 H20.4"/></g></svg>
<div class="a td" style="left:1339px;top:1180px">表单字段权限</div>
<div class="a td" style="left:1567px;top:1180px">字段权限配置</div>
<div class="a tag" style="left:2022px;top:1177px">运行中</div>
<div class="a td" style="left:2251px;top:1180px">可选表单字段权限，设置…</div>
<div class="a td" style="left:2651px;top:1180px"><span class="one">1<svg viewBox="0 0 556 1117" preserveAspectRatio="none"><path d="M214 187 H325 V905 H214 V352 C175 395 105 421 32 421 V349 C125 340 195 285 214 187 Z" fill="#000"/></svg></span></div>
<svg class="a" style="left:0;top:588px" width="1" height="1"><g fill="none" stroke="#409eff" stroke-width="1.7" stroke-linejoin="round"><path d="M2879 611.7 C2883 605.5 2887 603.3 2892 603.3 C2897 603.3 2901 605.5 2905 611.7 C2901 617.9 2897 620.2 2892 620.2 C2887 620.2 2883 617.9 2879 611.7 Z"/><circle cx="2892" cy="611.7" r="5.4"/><path d="M2934.4 600.8 H2946.8 L2953.3 607 V623.3 H2934.4 Z"/><path d="M2946.8 601 V607 H2953"/><path d="M2939 607.6 H2943.3 M2939 612.8 H2949.3 M2939 618 H2949.3"/><path d="M2991.2 603 V600.8 H3007.4 V620.2 H3005"/><path d="M2984.7 605.6 H3001.8 V623.3 H2984.7 Z"/><path d="M2989 612.2 H2997.8 M2989 617.4 H2997.8"/><path d="M3040.3 601 V606.5 H3045"/><path d="M3041.2 605.8 A9.8 9.8 0 1 1 3038.6 612.2"/><path d="M3106.9 604.9 L3092.7 613.5 L3106.9 619.1" stroke-width="1.5"/></g><g fill="#409eff"><circle cx="3106.9" cy="604.9" r="3.3"/><circle cx="3092.7" cy="613.5" r="3.3"/><circle cx="3106.9" cy="619.1" r="3.3"/></g></svg>
<div class="a rowline" style="top:1248px"></div>
<div class="a cb" style="left:488px;top:1284px"></div>
<div class="a td" style="left:567px;top:1278px">9</div>
<div class="a td" style="left:647px;top:1278px"><span class="one">1<svg viewBox="0 0 556 1117" preserveAspectRatio="none"><path d="M214 187 H325 V905 H214 V352 C175 395 105 421 32 421 V349 C125 340 195 285 214 187 Z" fill="#000"/></svg></span>888590365…</div>
<div class="a td" style="left:883px;top:1278px;width:200px">一键发布无需编码</div>
<svg class="a" style="left:1114.2px;top:1277.8px" width="32" height="38" viewBox="0 0 32 38"><g fill="none" stroke="#409eff" stroke-width="2" stroke-linejoin="round" stroke-linecap="round"><circle cx="15.7" cy="12.1" r="11.1"/><path d="M10.6 16 C13 19.2 18.4 19.2 20.8 16"/><path d="M1.6 34.6 C3 28.5 8.5 24.5 15.7 24.5 C23 24.5 28.5 28.5 29.9 34.6 A1.7 1.7 0 0 1 28.3 36.6 H3.2 A1.7 1.7 0 0 1 1.6 34.6 Z"/></g></svg>
<div class="a td" style="left:1339px;top:1278px">一键发布无…</div>
<div class="a td" style="left:1567px;top:1278px">办公测试</div>
<div class="a tag" style="left:2022px;top:1275px">运行中</div>
<div class="a td" style="left:2251px;top:1278px">本系统支持 Online 零代码…</div>
<div class="a td" style="left:2651px;top:1278px"><span class="one">1<svg viewBox="0 0 556 1117" preserveAspectRatio="none"><path d="M214 187 H325 V905 H214 V352 C175 395 105 421 32 421 V349 C125 340 195 285 214 187 Z" fill="#000"/></svg></span></div>
<svg class="a" style="left:0;top:686px" width="1" height="1"><g fill="none" stroke="#409eff" stroke-width="1.7" stroke-linejoin="round"><path d="M2879 611.7 C2883 605.5 2887 603.3 2892 603.3 C2897 603.3 2901 605.5 2905 611.7 C2901 617.9 2897 620.2 2892 620.2 C2887 620.2 2883 617.9 2879 611.7 Z"/><circle cx="2892" cy="611.7" r="5.4"/><path d="M2934.4 600.8 H2946.8 L2953.3 607 V623.3 H2934.4 Z"/><path d="M2946.8 601 V607 H2953"/><path d="M2939 607.6 H2943.3 M2939 612.8 H2949.3 M2939 618 H2949.3"/><path d="M2991.2 603 V600.8 H3007.4 V620.2 H3005"/><path d="M2984.7 605.6 H3001.8 V623.3 H2984.7 Z"/><path d="M2989 612.2 H2997.8 M2989 617.4 H2997.8"/><path d="M3040.3 601 V606.5 H3045"/><path d="M3041.2 605.8 A9.8 9.8 0 1 1 3038.6 612.2"/><path d="M3106.9 604.9 L3092.7 613.5 L3106.9 619.1" stroke-width="1.5"/></g><g fill="#409eff"><circle cx="3106.9" cy="604.9" r="3.3"/><circle cx="3092.7" cy="613.5" r="3.3"/><circle cx="3106.9" cy="619.1" r="3.3"/></g></svg>
<div class="a rowline" style="top:1346px"></div>
<div class="a cb" style="left:488px;top:1382px"></div>
<div class="a td" style="left:567px;top:1376px"><span class="one">1<svg viewBox="0 0 556 1117" preserveAspectRatio="none"><path d="M214 187 H325 V905 H214 V352 C175 395 105 421 32 421 V349 C125 340 195 285 214 187 Z" fill="#000"/></svg></span>0</div>
<div class="a td" style="left:647px;top:1376px"><span class="one">1<svg viewBox="0 0 556 1117" preserveAspectRatio="none"><path d="M214 187 H325 V905 H214 V352 C175 395 105 421 32 421 V349 C125 340 195 285 214 187 Z" fill="#000"/></svg></span>888590297…</div>
<div class="a td" style="left:883px;top:1376px;width:200px">测试自动建表存储</div>
<svg class="a" style="left:1112px;top:1376.0px" width="36" height="36" viewBox="0 0 36 36"><g fill="none" stroke="#409eff" stroke-width="2.4" stroke-linejoin="round"><path d="M33.20 14.49 A15.60 15.60 0 0 1 33.20 21.51 L29.31 22.57 A10.98 10.98 0 0 0 27.61 25.51 L28.64 29.41 A15.60 15.60 0 0 1 22.56 32.92 L19.70 30.08 A10.98 10.98 0 0 0 16.30 30.08 L13.44 32.92 A15.60 15.60 0 0 1 7.36 29.41 L8.39 25.51 A10.98 10.98 0 0 0 6.69 22.57 L2.80 21.51 A15.60 15.60 0 0 1 2.80 14.49 L6.69 13.43 A10.98 10.98 0 0 0 8.39 10.49 L7.36 6.59 A15.60 15.60 0 0 1 13.44 3.08 L16.30 5.92 A10.98 10.98 0 0 0 19.70 5.92 L22.56 3.08 A15.60 15.60 0 0 1 28.64 6.59 L27.61 10.49 A10.98 10.98 0 0 0 29.31 13.43 Z"/><circle cx="18" cy="18" r="5.2"/></g></svg>
<div class="a td" style="left:1339px;top:1376px">测试自动建…</div>
<div class="a td" style="left:1567px;top:1376px">自动建表存储</div>
<div class="a tag" style="left:2022px;top:1373px">运行中</div>
<div class="a td" style="left:2251px;top:1376px">自动建表设计为了数据单…</div>
<div class="a td" style="left:2651px;top:1376px"><span class="one">1<svg viewBox="0 0 556 1117" preserveAspectRatio="none"><path d="M214 187 H325 V905 H214 V352 C175 395 105 421 32 421 V349 C125 340 195 285 214 187 Z" fill="#000"/></svg></span></div>
<svg class="a" style="left:0;top:784px" width="1" height="1"><g fill="none" stroke="#409eff" stroke-width="1.7" stroke-linejoin="round"><path d="M2879 611.7 C2883 605.5 2887 603.3 2892 603.3 C2897 603.3 2901 605.5 2905 611.7 C2901 617.9 2897 620.2 2892 620.2 C2887 620.2 2883 617.9 2879 611.7 Z"/><circle cx="2892" cy="611.7" r="5.4"/><path d="M2934.4 600.8 H2946.8 L2953.3 607 V623.3 H2934.4 Z"/><path d="M2946.8 601 V607 H2953"/><path d="M2939 607.6 H2943.3 M2939 612.8 H2949.3 M2939 618 H2949.3"/><path d="M2991.2 603 V600.8 H3007.4 V620.2 H3005"/><path d="M2984.7 605.6 H3001.8 V623.3 H2984.7 Z"/><path d="M2989 612.2 H2997.8 M2989 617.4 H2997.8"/><path d="M3040.3 601 V606.5 H3045"/><path d="M3041.2 605.8 A9.8 9.8 0 1 1 3038.6 612.2"/><path d="M3106.9 604.9 L3092.7 613.5 L3106.9 619.1" stroke-width="1.5"/></g><g fill="#409eff"><circle cx="3106.9" cy="604.9" r="3.3"/><circle cx="3092.7" cy="613.5" r="3.3"/><circle cx="3106.9" cy="619.1" r="3.3"/></g></svg>
<div class="a rowline" style="top:1444px"></div>
<svg class="a" style="left:0;top:0" width="1" height="1"><rect x="2863.7" y="478" width="270.6" height="72.7" rx="1.5" fill="none" stroke="#f64f51" stroke-width="7.5"/></svg>
<div class="a" style="left:2263.5px;top:1489.5px;font-size:28px;line-height:40px;color:#5b5e66">共 <span class="one">1<svg viewBox="0 0 556 1117" preserveAspectRatio="none"><path d="M214 187 H325 V905 H214 V352 C175 395 105 421 32 421 V349 C125 340 195 285 214 187 Z" fill="#5b5e66"/></svg></span>0 条</div>
<div class="a inp" style="left:2399px;top:1476px;width:255px;height:63px"><div class="a ph" style="color:#5b5e66;left:22px;top:2px"><span class="one">1<svg viewBox="0 0 556 1117" preserveAspectRatio="none"><path d="M214 187 H325 V905 H214 V352 C175 395 105 421 32 421 V349 C125 340 195 285 214 187 Z" fill="#5b5e66"/></svg></span>0条/页</div><svg class="a" style="left:204px;top:24px" width="24" height="14" viewBox="0 0 24 14"><path d="M3 3 L12.5 12 L22 3" fill="none" stroke="#b4b7be" stroke-width="1.6"/></svg></div>
<div class="a" style="left:2686px;top:1476px;width:64px;height:64px;background:#f5f6f9;border-radius:4px"></div>
<svg class="a" style="left:2710px;top:1498px" width="14" height="20" viewBox="0 0 14 20"><path d="M10.5 2.5 L3.5 10 L10.5 17.5" fill="none" stroke="#a8abb2" stroke-width="1.6"/></svg>
<div class="a" style="left:2766px;top:1476px;width:64px;height:64px;background:#409eff;border-radius:4px;color:#fff;font-size:28px;font-weight:bold;line-height:63px;text-align:center"><span class="one">1<svg viewBox="0 0 556 1117" preserveAspectRatio="none"><path d="M214 187 H325 V905 H214 V352 C175 395 105 421 32 421 V349 C125 340 195 285 214 187 Z" fill="#fff" stroke="#fff" stroke-width="40"/></svg></span></div>
<div class="a" style="left:2846px;top:1476px;width:64px;height:64px;background:#f5f6f9;border-radius:4px"></div>
<svg class="a" style="left:2872px;top:1498px" width="14" height="20" viewBox="0 0 14 20"><path d="M3.5 2.5 L10.5 10 L3.5 17.5" fill="none" stroke="#a8abb2" stroke-width="1.6"/></svg>
<div class="a" style="left:2951px;top:1489.5px;font-size:28px;line-height:40px;color:#5b5e66">前往</div>
<div class="a inp" style="left:3022px;top:1476px;width:112px;height:63px;text-align:center;font-size:28px;line-height:59px;color:#5b5e66"><span class="one">1<svg viewBox="0 0 556 1117" preserveAspectRatio="none"><path d="M214 187 H325 V905 H214 V352 C175 395 105 421 32 421 V349 C125 340 195 285 214 187 Z" fill="#5b5e66"/></svg></span></div>
<div class="a" style="left:3167px;top:1489.5px;font-size:28px;line-height:40px;color:#5b5e66">页</div>
<div class="a wm" style="left:67px;top:97px">admin</div>
<div class="a wm" style="left:467px;top:97px">admin</div>
<div class="a wm" style="left:867px;top:97px">admin</div>
<div class="a wm" style="left:1267px;top:97px">admin</div>
<div class="a wm" style="left:1667px;top:97px">admin</div>
<div class="a wm" style="left:2067px;top:97px">admin</div>
<div class="a wm" style="left:2467px;top:97px">admin</div>
<div class="a wm" style="left:2867px;top:97px">admin</div>
<div class="a wm" style="left:67px;top:357px">admin</div>
<div class="a wm" style="left:467px;top:357px">admin</div>
<div class="a wm" style="left:867px;top:357px">admin</div>
<div class="a wm" style="left:1267px;top:357px">admin</div>
<div class="a wm" style="left:1667px;top:357px">admin</div>
<div class="a wm" style="left:2067px;top:357px">admin</div>
<div class="a wm" style="left:2467px;top:357px">admin</div>
<div class="a wm" style="left:2867px;top:357px">admin</div>
<div class="a wm" style="left:67px;top:617px">admin</div>
<div class="a wm" style="left:467px;top:617px">admin</div>
<div class="a wm" style="left:867px;top:617px">admin</div>
<div class="a wm" style="left:1267px;top:617px">admin</div>
<div class="a wm" style="left:1667px;top:617px">admin</div>
<div class="a wm" style="left:2067px;top:617px">admin</div>
<div class="a wm" style="left:2467px;top:617px">admin</div>
<div class="a wm" style="left:2867px;top:617px">admin</div>
<div class="a wm" style="left:67px;top:877px">admin</div>
<div class="a wm" style="left:467px;top:877px">admin</div>
<div class="a wm" style="left:867px;top:877px">admin</div>
<div class="a wm" style="left:1267px;top:877px">admin</div>
<div class="a wm" style="left:1667px;top:877px">admin</div>
<div class="a wm" style="left:2067px;top:877px">admin</div>
<div class="a wm" style="left:2467px;top:877px">admin</div>
<div class="a wm" style="left:2867px;top:877px">admin</div>
<div class="a wm" style="left:67px;top:1137px">admin</div>
<div class="a wm" style="left:467px;top:1137px">admin</div>
<div class="a wm" style="left:867px;top:1137px">admin</div>
<div class="a wm" style="left:1267px;top:1137px">admin</div>
<div class="a wm" style="left:1667px;top:1137px">admin</div>
<div class="a wm" style="left:2067px;top:1137px">admin</div>
<div class="a wm" style="left:2467px;top:1137px">admin</div>
<div class="a wm" style="left:2867px;top:1137px">admin</div>
<div class="a wm" style="left:67px;top:1397px">admin</div>
<div class="a wm" style="left:467px;top:1397px">admin</div>
<div class="a wm" style="left:867px;top:1397px">admin</div>
<div class="a wm" style="left:1267px;top:1397px">admin</div>
<div class="a wm" style="left:1667px;top:1397px">admin</div>
<div class="a wm" style="left:2067px;top:1397px">admin</div>
<div class="a wm" style="left:2467px;top:1397px">admin</div>
<div class="a wm" style="left:2867px;top:1397px">admin</div>
<div class="a wm" style="left:67px;top:1657px">admin</div>
<div class="a wm" style="left:467px;top:1657px">admin</div>
<div class="a wm" style="left:867px;top:1657px">admin</div>
<div class="a wm" style="left:1267px;top:1657px">admin</div>
<div class="a wm" style="left:1667px;top:1657px">admin</div>
<div class="a wm" style="left:2067px;top:1657px">admin</div>
<div class="a wm" style="left:2467px;top:1657px">admin</div>
<div class="a wm" style="left:2867px;top:1657px">admin</div></body></html>
